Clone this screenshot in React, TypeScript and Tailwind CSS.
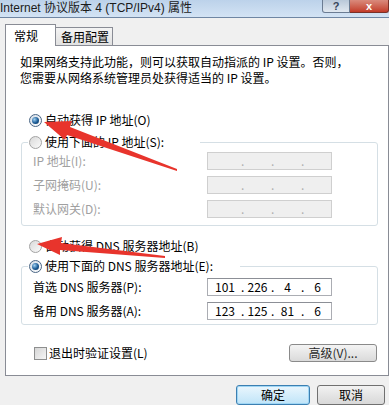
import React from "react";

function Radio({checked}: { checked?: boolean }) {
    return (
        <span
            className={`flex h-[13px] w-[13px] shrink-0 items-center justify-center rounded-full border ${
                checked
                    ? "border-[#4a6685] bg-gradient-to-br from-[#d5dde6] to-white"
                    : "border-[#a3a3a3] bg-gradient-to-br from-[#d9d9d9] to-[#fbfbfb]"
            }`}
        >
            {checked && (
                <span
                    className="h-[7px] w-[7px] rounded-full bg-[radial-gradient(circle_at_35%_35%,#9fd0f3,#1a5a94_55%,#0b2f55)]"/>
            )}
        </span>
    );
}

function IpField({parts, disabled}: { parts: string[]; disabled?: boolean }) {
    return (
        <div
            className={`flex h-[18px] w-[125px] items-center border leading-[16px] ${
                disabled
                    ? "border-[#cfcfcf] bg-[#efefef] text-[#b0b0b0]"
                    : "border-[#abadb3] border-t-[#8c8f96] bg-white text-black"
            }`}
        >
            <span className="w-[33px] pl-[7px]">{parts[0]}</span>
            {parts.slice(1).map((p, i) => (
                <span key={i} className="flex w-[30px]">
                    <span className="w-[3px]">.</span>
                    <span className="flex-1 text-center">{p}</span>
                </span>
            ))}
        </div>
    );
}

function FieldRow({label, parts, disabled}: { label: string; parts: string[]; disabled?: boolean }) {
    return (
        <div className="flex h-[18px] items-center pl-[5px]">
            <span className={`w-[174px] ${disabled ? "text-[#a0a0a0]" : "text-black"}`}>{label}</span>
            <IpField parts={parts} disabled={disabled}/>
        </div>
    );
}

export default function App() {
    const empty = ["", "", "", ""];

    return (
        <div
            className="relative h-[405px] w-[389px] overflow-hidden bg-[#f0f0f0] font-['Noto_Sans_CJK_SC',sans-serif] text-[12px] leading-[16px] text-black">
            {/* title bar */}
            <div
                className="flex h-[18px] items-start justify-between border-b border-[#6f86a3] bg-gradient-to-b from-[#bcd2ea] to-[#d3e3f4]">
                <span
                    className="whitespace-nowrap font-['Liberation_Sans','Noto_Sans_CJK_SC',sans-serif] text-[12px] leading-[16px] text-[#1b1b1b]">
                    Internet 协议版本 4 (TCP/IPv4) 属性
                </span>
                <div className="flex">
                    <span
                        className="flex h-[13px] w-[28px] items-end justify-center overflow-hidden rounded-bl-[3px] border border-t-0 border-[#6b7c93] bg-gradient-to-b from-[#b9c8d9] to-[#e1e8f0] font-['Liberation_Sans',sans-serif] text-[11px] font-bold leading-[12px] text-[#38465a]">
                        ?
                    </span>
                    <span
                        className="flex h-[13px] w-[39px] items-center justify-center overflow-hidden rounded-br-[3px] border border-l-0 border-t-0 border-[#7a3128] bg-gradient-to-b from-[#d98a7c] to-[#c23a28] font-['Liberation_Sans',sans-serif] text-[11px] font-bold leading-[12px] text-white">
                        x
                    </span>
                </div>
            </div>

            {/* tabs */}
            <div className="flex items-end pl-[5px] pt-[6px]">
                <div
                    className="relative z-10 -mb-[1px] h-[22px] w-[51px] border border-b-0 border-[#898c95] bg-white pl-[8px] pt-[3px]">
                    常规
                </div>
                <div
                    className="h-[18px] w-[57px] border border-b-0 border-l-0 border-[#898c95] bg-gradient-to-b from-[#f4f4f4] to-[#e1e1e1] pl-[5px] pt-[1px]">
                    备用配置
                </div>
            </div>

            {/* panel */}
            <div className="ml-[5px] h-[331px] w-[384px] border border-[#898c95] bg-white">
                <p className="ml-[14px] mt-[8px] whitespace-nowrap leading-[16px]">
                    <span className="block">如果网络支持此功能，则可以获取自动指派的 IP 设置。否则，</span>
                    <span className="block">您需要从网络系统管理员处获得适当的 IP 设置。</span>
                </p>

                <label className="mt-[26px] flex h-[16px] items-center gap-[3px] pl-[23px]">
                    <Radio checked/>
                    <span>自动获得 IP 地址(O)</span>
                </label>

                <fieldset className="ml-[15px] mt-[6px] w-[357px] rounded-[3px] border border-[#d5dfe5] px-[6px] pb-[7px]">
                    <legend className="flex h-[16px] w-[172px] items-center gap-[3px] pl-[1px]">
                        <Radio/>
                        <span>使用下面的 IP 地址(S):</span>
                    </legend>
                    <div className="mt-[2px] flex flex-col gap-[6px]">
                        <FieldRow label="IP 地址(I):" parts={empty} disabled/>
                        <FieldRow label="子网掩码(U):" parts={empty} disabled/>
                        <FieldRow label="默认网关(D):" parts={empty} disabled/>
                    </div>
                </fieldset>

                <label className="mt-[12px] flex h-[16px] items-center gap-[3px] pl-[23px]">
                    <Radio/>
                    <span>自动获得 DNS 服务器地址(B)</span>
                </label>

                <fieldset className="ml-[15px] mt-[4px] w-[357px] rounded-[3px] border border-[#d5dfe5] px-[6px] pb-[4px]">
                    <legend className="flex h-[16px] w-[212px] items-center gap-[3px] pl-[1px]">
                        <Radio checked/>
                        <span>使用下面的 DNS 服务器地址(E):</span>
                    </legend>
                    <div className="mt-[4px] flex flex-col gap-[6px]">
                        <FieldRow label="首选 DNS 服务器(P):" parts={["101", "226", "4", "6"]}/>
                        <FieldRow label="备用 DNS 服务器(A):" parts={["123", "125", "81", "6"]}/>
                    </div>
                </fieldset>

                <div className="mt-[19px] flex h-[18px] items-center justify-between pl-[28px] pr-[11px]">
                    <label className="flex items-center gap-[2px]">
                        <span
                            className="h-[13px] w-[13px] border border-[#8e8f8f] bg-gradient-to-br from-[#d6d6d6] to-[#f6f6f6]"/>
                        <span>退出时验证设置(L)</span>
                    </label>
                    <button
                        className="h-[18px] w-[88px] rounded-[3px] border border-[#8a8a8a] bg-gradient-to-b from-[#f4f4f4] to-[#dadada] leading-[16px] text-[#2a2a2a]">
                        高级(V)...
                    </button>
                </div>
            </div>

            {/* dialog buttons */}
            <div className="mt-[9px] flex justify-end gap-[7px] pr-[4px]">
                <button
                    className="h-[20px] w-[74px] rounded-[3px] border border-[#3c7fb1] bg-gradient-to-b from-[#eaf6fd] to-[#bfe4f8] leading-[18px] shadow-[inset_0_0_0_1px_#9fd6f5]">
                    确定
                </button>
                <button
                    className="h-[20px] w-[68px] rounded-[3px] border border-[#707070] bg-gradient-to-b from-[#f2f2f2] to-[#d8d8d8] leading-[18px]">
                    取消
                </button>
            </div>

            {/* red annotation arrows */}
            <svg className="pointer-events-none absolute left-0 top-0" width="389" height="405">
                <polygon
                    fill="#e8342c"
                    points="44,122 72,121 70,127 177,169 177,171 67,135 65,140"
                />
                <polygon
                    fill="#e8342c"
                    points="37,244 62,237 61,243 165,256 165,258 60,250 60,255"
                />
            </svg>
        </div>
    );
}
